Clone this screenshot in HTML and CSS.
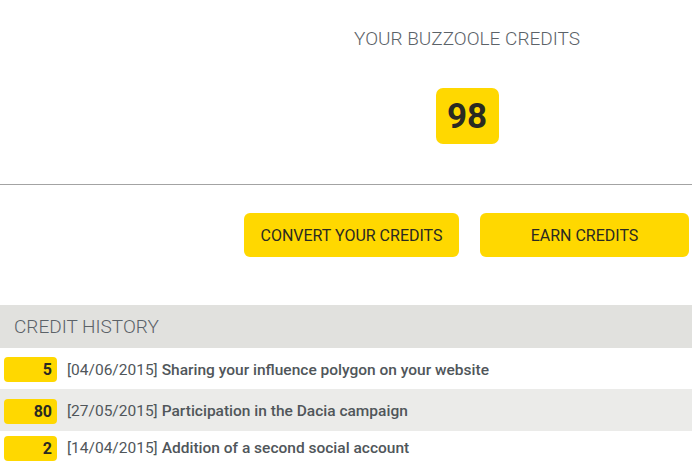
FILE: index.html
```html
<!DOCTYPE html>
<html>
<head>
  <meta charset="UTF-8">
  <title>Buzzoole Credits</title>
  <link rel="stylesheet" href="styles.css">
</head>
<body>
  <div class="credits">
    <div class="credits-inner">
      <h2 class="credits-title">YOUR BUZZOOLE CREDITS</h2>
      <div class="credits-total">98</div>
    </div>
  </div>
  <hr class="divider">
  <div class="actions">
    <button class="btn btn-convert">CONVERT YOUR CREDITS</button>
    <button class="btn btn-earn">EARN CREDITS</button>
  </div>
  <div class="history">
    <h3 class="history-title">CREDIT HISTORY</h3>
    <div class="history-row">
      <span class="amount">5</span>
      <span class="date">[04/06/2015]</span>
      <span class="desc">Sharing your influence polygon on your website</span>
    </div>
    <div class="history-row alt">
      <span class="amount">80</span>
      <span class="date">[27/05/2015]</span>
      <span class="desc">Participation in the Dacia campaign</span>
    </div>
    <div class="history-row last">
      <span class="amount">2</span>
      <span class="date">[14/04/2015]</span>
      <span class="desc">Addition of a second social account</span>
    </div>
  </div>
</body>
</html>
```

FILE: styles.css
```css
:root {
  --yellow: #ffd800;
  --text-gray: #5b6268;
  --row-text: #50565a;
  --dark: #2a2a22;
}
* {
  box-sizing: border-box;
}
body {
  margin: 0;
  background-color: #fff;
  font-family: Roboto, 'Open Sans', sans-serif;
  color: var(--text-gray);
  overflow: hidden;
}
.credits {
  display: flex;
  justify-content: flex-end;
}
.credits-inner {
  width: 447px;
  padding-right: 3px;
  display: flex;
  flex-direction: column;
  align-items: center;
}
.credits-title {
  margin: 0;
  padding-top: 27px;
  font-size: 19px;
  line-height: 24px;
  font-weight: 300;
  color: var(--text-gray);
}
.credits-total {
  margin-top: 37px;
  width: 63px;
  height: 56px;
  border-radius: 7px;
  background-color: var(--yellow);
  color: var(--dark);
  font-size: 35px;
  font-weight: 700;
  display: flex;
  align-items: center;
  justify-content: center;
}
.divider {
  margin: 40px 0 0;
  border: none;
  border-top: 1px solid #a3a3a3;
}
.actions {
  display: flex;
  justify-content: flex-end;
  gap: 21px;
  margin-top: 28px;
  padding-right: 3px;
}
.btn {
  height: 44px;
  border: none;
  border-radius: 6px;
  background-color: var(--yellow);
  color: var(--dark);
  font-family: Roboto, 'Open Sans', sans-serif;
  font-size: 16px;
  font-weight: 400;
  padding: 0;
  cursor: pointer;
}
.btn-convert {
  width: 215px;
}
.btn-earn {
  width: 209px;
}
.history {
  margin-top: 48px;
}
.history-title {
  margin: 0;
  height: 43px;
  display: flex;
  align-items: center;
  padding-left: 14px;
  background-color: #e1e1de;
  font-size: 19px;
  font-weight: 300;
  color: var(--text-gray);
}
.history-row {
  display: flex;
  align-items: center;
  height: 41px;
  padding-left: 4px;
  padding-top: 2px;
  font-size: 15.5px;
  color: var(--row-text);
}
.history-row.alt {
  background-color: #ebebe9;
  height: 42px;
}
.history-row.last {
  padding-top: 0;
  height: 34px;
}
.amount {
  width: 53px;
  height: 25px;
  border-radius: 4px;
  background-color: var(--yellow);
  color: var(--dark);
  font-weight: 700;
  text-align: right;
  padding-right: 5px;
  line-height: 25px;
  font-size: 16px;
  margin-right: 10px;
}
.date {
  margin-right: 4px;
}
.desc {
  font-weight: 500;
}
```
